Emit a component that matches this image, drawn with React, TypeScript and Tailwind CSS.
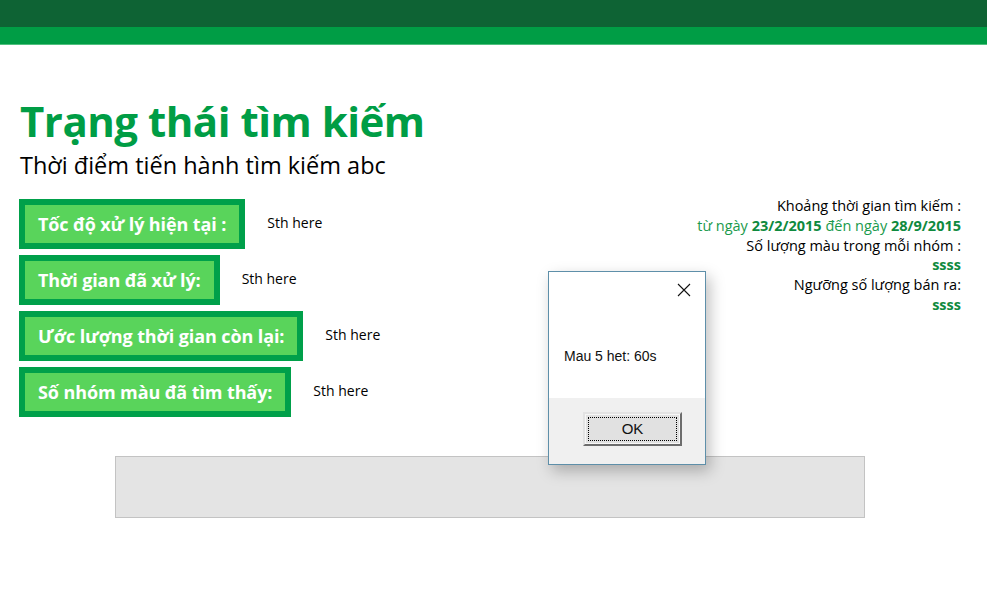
import React from "react";

const labels = [
  { text: "Tốc độ xử lý hiện tại :", value: "Sth here" },
  { text: "Thời gian đã xử lý:", value: "Sth here" },
  { text: "Ước lượng thời gian còn lại:", value: "Sth here" },
  { text: "Số nhóm màu đã tìm thấy:", value: "Sth here" },
];

const font = { fontFamily: '"Open Sans", "Noto Sans", sans-serif' };
const winFont = { fontFamily: '"Liberation Sans", Arial, sans-serif' };

export default function App() {
  return (
    <div className="relative w-[987px] h-[612px] bg-white overflow-hidden" style={font}>
      <div className="h-[27px] bg-[#0e6334]" />
      <div className="h-[18px] bg-[#009d45] border-b border-[#4fc07e]" />

      <div className="pl-5 pr-[26px]">
        <h1 className="mt-[50px] text-[42px] leading-[52px] font-bold text-[#009d45] tracking-[-0.5px]">
          Trạng thái tìm kiếm
        </h1>
        <p className="mt-[2px] text-[23.5px] leading-[32px] text-black">
          Thời điểm tiến hành tìm kiếm abc
        </p>

        <div className="mt-[18px] flex justify-between items-start">
          <ul className="flex flex-col gap-[6px] -ml-[1px]">
            {labels.map((l, i) => (
              <li key={i} className="flex items-start">
                <div className="border-[6px] border-[#00a04a] bg-[#59d45b] px-[13px] h-[50px] flex items-center">
                  <span className="text-white font-bold text-[18px] tracking-[-0.1px]">{l.text}</span>
                </div>
                <span className="ml-[22px] mt-[13px] text-[14px] text-black">{l.value}</span>
              </li>
            ))}
          </ul>

          <div className="text-right text-[14.5px] leading-[19.8px] text-black -mt-[3px]">
            <p>Khoảng thời gian tìm kiếm :</p>
            <p className="text-[#1a9a4c]">
              từ ngày <b className="text-[#0f8a3e]">23/2/2015</b> đến ngày{" "}
              <b className="text-[#0f8a3e]">28/9/2015</b>
            </p>
            <p>Số lượng màu trong mỗi nhóm :</p>
            <p className="font-bold text-[#0f8a3e]">ssss</p>
            <p>Ngưỡng số lượng bán ra:</p>
            <p className="font-bold text-[#0f8a3e]">ssss</p>
          </div>
        </div>

        <div className="mt-[39px] ml-[95px] w-[750px] h-[62px] bg-[#e4e4e4] border border-[#c3c3c3]" />
      </div>

      <div className="absolute left-[548px] top-[271px] w-[158px] h-[194px] border border-[#5e8fa9] bg-white shadow-[4px_6px_14px_rgba(0,0,0,0.25)] flex flex-col">
        <div className="flex-1 relative" style={winFont}>
          <svg className="absolute left-[128px] top-[11px]" width="14" height="14" viewBox="0 0 14 14">
            <path d="M1 1 L13 13 M13 1 L1 13" stroke="#111" strokeWidth="1.1" />
          </svg>
          <p className="absolute left-[15px] top-[74px] text-[14px] text-[#111]">Mau 5 het: 60s</p>
        </div>
        <div className="h-[66px] bg-[#f0f0f0] flex pl-[34px] pt-[14px]">
          <div className="w-[99px] h-[34px] border-2 border-t-[#e3e3e3] border-l-[#e3e3e3] border-r-[#6d6d6d] border-b-[#6d6d6d] bg-[#6d6d6d]">
            <div className="w-full h-full bg-[#e1e1e1] border border-[#f7f7f7] p-[2px]">
              <div className="w-full h-full border border-dotted border-black flex items-center justify-center text-[15px] text-[#111]" style={winFont}>
                OK
              </div>
            </div>
          </div>
        </div>
      </div>
    </div>
  );
}
